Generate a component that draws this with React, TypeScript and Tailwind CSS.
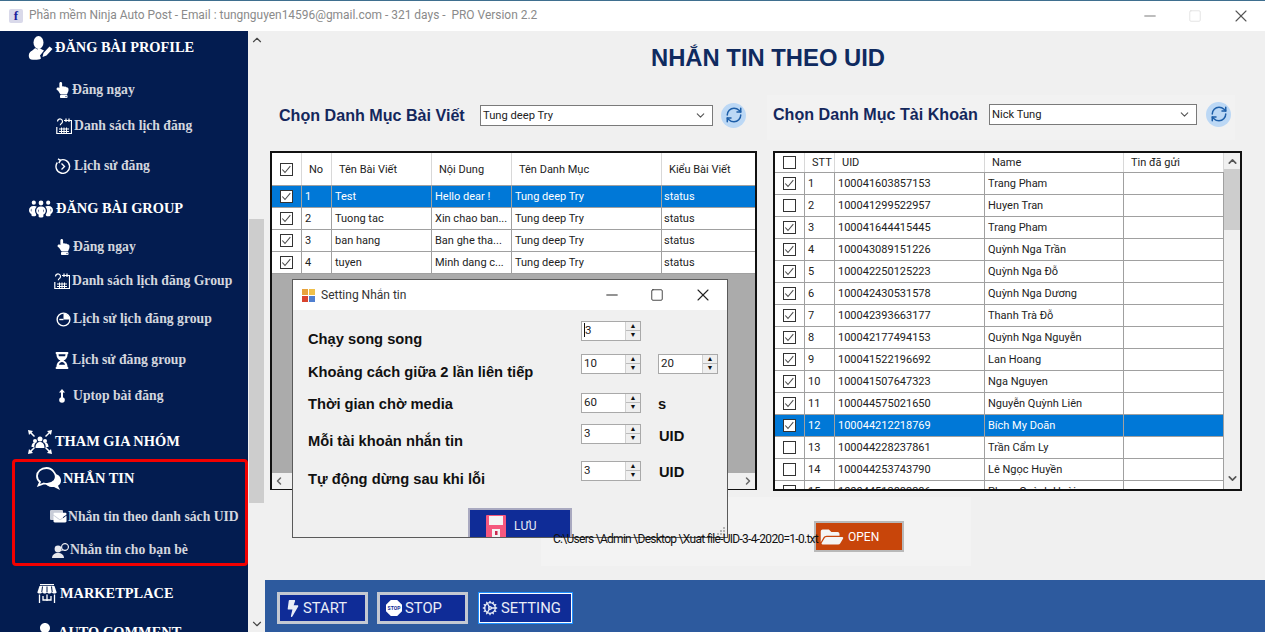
import { FaBolt, FaEnvelope, FaFolderOpen, FaHandPointUp, FaHourglassHalf, FaUserTie } from "react-icons/fa";
import { FaPeopleGroup } from "react-icons/fa6";
import { LuChevronDown, LuChevronLeft, LuChevronRight, LuChevronUp, LuCog, LuMinus, LuRefreshCw, LuSquare, LuX } from "react-icons/lu";
import type { ReactNode } from "react";

const navy = "#031c50";

const ProfileIcon = () => (
  <svg viewBox="0 0 25 25" className="h-[25px] w-[25px]" fill="white">
    <ellipse cx="10.500" cy="6.500" rx="5" ry="6.500" />
    <path d="M7 12c-1 2-5 3-6 6-.6 2 0 5 2 5.500 3 .6 8 .6 10-1l-1-3 4-5-5-2.500-1.500 1.500z" />
    <path d="M14.500 21l1-4 6-6.500 3 2.500-6 6.500z" />
  </svg>
);

const CalendarIcon = () => (
  <svg viewBox="0 0 16 16" className="h-[16px] w-[16px]" fill="none" stroke="white" strokeWidth="1.200">
    <path d="M1.500 3.500a2.500 2.500 0 1 1 4 2c-.8.500-1.200 1-1.200 1.800" />
    <path d="M8 2.500h7.500V15.500H.8V9" />
    <path d="M10 .5v3.500M13 .5v3.500" />
    <path d="M3 11h10M3 13.500h10M5.500 9.500v5.500M8 9.500v5.500M10.500 9.500v5.500" strokeWidth="1" />
  </svg>
);

const HistoryIcon = () => (
  <svg viewBox="0 0 16 16" className="h-[16px] w-[16px]" fill="none" stroke="white" strokeWidth="1.400">
    <path d="M5 2.300A6.800 6.800 0 1 1 2.300 4.500" />
    <path d="M3 .8L5.500 2.500 3.800 5" />
    <path d="M6.500 5.500L9.500 8.500 6.500 11.500" />
  </svg>
);

const ClockIcon = () => (
  <svg viewBox="0 0 16 16" className="h-[15px] w-[15px]" fill="none" stroke="white" strokeWidth="1.500">
    <circle cx="8" cy="8" r="6.800" />
    <path d="M8 8V1.500A6.500 6.500 0 0 1 14.500 8z" fill="white" stroke="none" />
    <path d="M8 8H3.500" />
  </svg>
);

const UptopIcon = () => (
  <svg viewBox="0 0 8 14" className="h-[14px] w-[8px]" fill="white">
    <path d="M4 0l3 3.500H5V9H3V3.500H1z" />
    <circle cx="4" cy="11" r="2.800" />
  </svg>
);

const JoinIcon = () => (
  <svg viewBox="0 0 24 24" className="h-[24px] w-[24px]" fill="white">
    <circle cx="12" cy="9" r="2.500" />
    <circle cx="7" cy="11" r="2" />
    <circle cx="17" cy="11" r="2" />
    <path d="M7.500 18c0-3.500 1.500-6 4.500-6s4.500 2.500 4.500 6zM3.500 17c0-2.500 1-4.500 3.500-4.500l.8.200C6.500 14 6.300 15.500 6.300 17zM20.500 17c0-2.500-1-4.500-3.500-4.500l-.8.200c1.300 1.300 1.500 2.800 1.500 4.300z" />
    <path d="M0 0l5 1-1.400 1.400L7 6 6 7 2.400 3.600 1 5zM24 0l-1 5-1.400-1.400L18 7l-1-1 3.600-3.400L19 1zM0 24l1-5 1.400 1.400L6 17l1 1-3.400 3.600L5 23zM24 24l-5-1 1.400-1.400L17 18l1-1 3.600 3.400L23 19z" />
  </svg>
);

const ChatIcon = () => (
  <svg viewBox="0 0 25 24" className="h-[24px] w-[25px]">
    <path d="M18 7c4 0 7 2.700 7 6.500 0 2.500-1 4-3 5.300l2 4.200-6-3c-5 .5-9-2-9-6 0-4 4-7 9-7z" fill="white" />
    <path d="M10.500 1C5 1 1 4.500 1 9c0 2.500 1.200 4.500 3 6l-1.500 3.500L8 16.500c4 1 8-.2 10.500-3 2-2.500 1.500-6-1-9-1.500-2-4-3.500-7-3.500z" fill={navy} stroke="white" strokeWidth="1.800" />
  </svg>
);

const StoreIcon = () => (
  <svg viewBox="0 0 20 20" className="h-[20px] w-[20px]" fill="none" stroke="white">
    <path d="M3 .5h14" strokeWidth="1.500" />
    <path d="M2.500 2h15L19.500 8H.5z" fill="white" stroke="none" />
    <path d="M5.500 2.500L4.800 8M10 2.500V8M14.500 2.500l.7 5.500" stroke={navy} strokeWidth="1" />
    <path d="M.5 8c0 1.800 4 1.800 4.800 0 .8 1.800 3.900 1.800 4.700 0 .8 1.800 3.900 1.800 4.700 0 .8 1.800 4.800 1.800 4.800 0" fill="white" strokeWidth="0.500" />
    <path d="M2.500 10.500V19M17.500 10.500V19M10 10.500V17M6 12v4h8v-4" strokeWidth="1.300" />
  </svg>
);

const Mail = () => (
  <span className="relative block h-[14px] w-[17px]">
    <span className="absolute left-0 top-0 h-[10px] w-[13px] rounded-[1px] bg-[#c9cdd8]" />
    <FaEnvelope className="absolute bottom-0 right-0 h-[13px] w-[14px] text-white" />
  </span>
);

const Friend = () => (
  <svg viewBox="0 0 17 16" className="h-[16px] w-[17px]" fill="#e8e9ee">
    <circle cx="6" cy="7" r="3.400" />
    <path d="M0 16c0-3 2.500-5 6-5s6 2 6 5z" />
    <path d="M9 5a4 4 0 1 1 2 3.400l-2 .8.700-1.800A4 4 0 0 1 9 5zm1.200 0a2.800 2.800 0 0 0 5.600 0 2.800 2.800 0 0 0-5.600 0z" />
  </svg>
);

type NavRow = { label: string; icon: ReactNode; row: string; box: string; head?: boolean };

const nav: NavRow[] = [
  { label: "ĐĂNG BÀI PROFILE", icon: <ProfileIcon />, row: "mt-[5px] pl-[28px]", box: "w-[27px]", head: true },
  { label: "Đăng ngay", icon: <FaHandPointUp className="h-[16px] w-[13px] text-white" />, row: "mt-[18px] pl-[56px]", box: "w-[16px]" },
  { label: "Danh sách lịch đăng", icon: <CalendarIcon />, row: "mt-[12px] pl-[56px]", box: "w-[18px]" },
  { label: "Lịch sử đăng", icon: <HistoryIcon />, row: "mt-[16px] pl-[55px]", box: "w-[19px]" },
  { label: "ĐĂNG BÀI GROUP", icon: <FaPeopleGroup className="h-[24px] w-[24px] text-white" />, row: "mt-[19px] pl-[29px]", box: "w-[27px]", head: true },
  { label: "Đăng ngay", icon: <FaHandPointUp className="h-[16px] w-[13px] text-white" />, row: "mt-[14px] pl-[57px]", box: "w-[16px]" },
  { label: "Danh sách lịch đăng Group", icon: <CalendarIcon />, row: "mt-[10px] pl-[54px]", box: "w-[18px]" },
  { label: "Lịch sử lịch đăng group", icon: <ClockIcon />, row: "mt-[14px] pl-[56px]", box: "w-[17px]" },
  { label: "Lịch sử đăng group", icon: <FaHourglassHalf className="h-[17px] w-[14px] text-white" />, row: "mt-[17px] pl-[55px]", box: "w-[17px]" },
  { label: "Uptop bài đăng", icon: <UptopIcon />, row: "mt-[12px] pl-[58px]", box: "w-[15px]" },
  { label: "THAM GIA NHÓM", icon: <JoinIcon />, row: "mt-[22px] pl-[28px]", box: "w-[27px]", head: true },
  { label: "NHẮN TIN", icon: <ChatIcon />, row: "mt-[13px] pl-[36px]", box: "w-[27px]", head: true },
  { label: "Nhắn tin theo danh sách UID", icon: <Mail />, row: "mt-[14px] pl-[50px]", box: "w-[18px]" },
  { label: "Nhắn tin cho bạn bè", icon: <Friend />, row: "mt-[9px] pl-[52px]", box: "w-[18px]" },
  { label: "MARKETPLACE", icon: <StoreIcon />, row: "mt-[20px] pl-[37px]", box: "w-[23px]", head: true },
  { label: "AUTO COMMENT", icon: <FaUserTie className="h-[20px] w-[20px] text-white" />, row: "mt-[15px] pl-[35px]", box: "w-[23px]", head: true },
];

const Check = ({ on }: { on: boolean }) => (
  <span className="flex h-[13px] w-[13px] items-center justify-center border border-[#333333] bg-white">
    {on && (
      <svg viewBox="0 0 13 13" className="h-[11px] w-[11px]" fill="none" stroke="#4a4a4a" strokeWidth="1.200">
        <path d="M1.500 6.500l3.200 3.500L11 2.500" />
      </svg>
    )}
  </span>
);

const posts = [
  ["1", "Test", "Hello dear !", "Tung deep Try", "status"],
  ["2", "Tuong tac", "Xin chao ban...", "Tung deep Try", "status"],
  ["3", "ban hang", "Ban ghe tha...", "Tung deep Try", "status"],
  ["4", "tuyen", "Minh dang c...", "Tung deep Try", "status"],
];

const accounts: [string, string, string, boolean][] = [
  ["1", "100041603857153", "Trang Pham", true],
  ["2", "100041299522957", "Huyen Tran", false],
  ["3", "100041644415445", "Trang Pham", true],
  ["4", "100043089151226", "Quỳnh Nga Trần", true],
  ["5", "100042250125223", "Quỳnh Nga Đỗ", true],
  ["6", "100042430531578", "Quỳnh Nga Dương", true],
  ["7", "100042393663177", "Thanh Trà Đỗ", true],
  ["8", "100042177494153", "Quỳnh Nga Nguyễn", true],
  ["9", "100041522196692", "Lan Hoang", true],
  ["10", "100041507647323", "Nga Nguyen", true],
  ["11", "100044575021650", "Nguyễn Quỳnh Liên", true],
  ["12", "100044212218769", "Bích My Doãn", true],
  ["13", "100044228237861", "Trần Cẩm Ly", false],
  ["14", "100044253743790", "Lê Ngọc Huyền", false],
  ["15", "100044513883386", "Phạm Quỳnh Hoài", false],
];

const Combo = ({ value, width }: { value: string; width: string }) => (
  <div className={`flex h-[21px] ${width} shrink-0 items-center justify-between border border-[#7a7a7a] bg-white pl-[2px] pr-[5px] text-[11.2px] text-[#222222]`}>
    <span className="pt-[2px]">{value}</span>
    <LuChevronDown className="h-[13px] w-[13px] text-[#555555]" />
  </div>
);

const Refresh = () => (
  <span className="flex h-[25px] w-[25px] shrink-0 items-center justify-center rounded-full bg-[#bcd8f5]">
    <LuRefreshCw className="h-[18px] w-[18px] text-[#1d5ea8]" />
  </span>
);

const Spin = ({ value, caret }: { value: string; caret?: boolean }) => (
  <div className="flex h-[20px] w-[60px] shrink-0 border border-[#a9a9a9] bg-white font-['Roboto',sans-serif] text-[11.5px] font-normal leading-[16px] text-[#222222]">
    <span className="flex-1 pl-[2px]">
      <span className={caret ? "border-l border-[#111111]" : ""}>{value}</span>
    </span>
    <span className="flex w-[15px] flex-col border-l border-[#d0d0d0] bg-[#efefef] text-[#111111]">
      <span className="flex h-[9px] items-center justify-center border-b border-[#bbbbbb] text-[7px] leading-none">▲</span>
      <span className="flex h-[9px] items-center justify-center text-[7px] leading-none">▼</span>
    </span>
  </div>
);

const Floppy = () => (
  <svg viewBox="0 0 20 22" className="h-[22px] w-[20px]">
    <path d="M1 0h18a1 1 0 0 1 1 1v21H0V1a1 1 0 0 1 1-1z" fill="#f5587e" />
    <rect x="3" y="1" width="14" height="9" fill="#f4f4f4" />
    <rect x="6" y="14" width="8" height="8" fill="#f4f4f4" />
    <rect x="9" y="16" width="2.500" height="4" fill="#c9284f" />
  </svg>
);

const StopIcon = () => (
  <span className="flex h-[16px] w-[16px] items-center justify-center bg-white text-[5px] font-bold leading-none text-[#0f2c97] [clip-path:polygon(30%_0,70%_0,100%_30%,100%_70%,70%_100%,30%_100%,0_70%,0_30%)]">STOP</span>
);

const ActionButton = ({ icon, label, active }: { icon: ReactNode; label: string; active?: boolean }) => (
  <div className={`flex h-[32px] items-center gap-[3px] bg-[#0f2c97] text-[14.8px] text-[#e9edf7] ${active ? "w-[95px] border border-[#1e90ff] pl-[3px] outline outline-1 -outline-offset-2 outline-white" : "w-[91px] border-[3px] border-[#c4c9d2] pl-[6px]"}`}>
    {icon}
    {label}
  </div>
);

export default function App() {
  return (
    <div className="relative flex h-[632px] w-[1265px] flex-col overflow-hidden bg-[#f0f0f0] font-['Roboto',sans-serif]">
      {/* window title */}
      <div className="flex h-[31px] shrink-0 items-center border-t border-[#3f6f8f] bg-white pl-[9px] text-[11.95px] text-[#8a8a8a]">
        <span className="mr-[6px] flex h-[14px] w-[14px] items-center justify-center rounded-[2px] bg-[#d9d9ea] font-['Liberation_Serif',serif] text-[13px] font-bold text-[#1b1f9c]">f</span>
        <span className="whitespace-pre">Phần mềm Ninja Auto Post - Email : tungnguyen14596@gmail.com - 321 days -  PRO Version 2.2</span>
        <div className="ml-auto flex items-center pr-[14px]">
          <LuMinus strokeWidth={1.3} className="mr-[29px] h-[18px] w-[18px] text-[#777777]" />
          <LuSquare strokeWidth={1.3} className="mr-[29px] h-[14px] w-[14px] text-[#dddddd]" />
          <LuX strokeWidth={1.3} className="h-[20px] w-[20px] text-[#555555]" />
        </div>
      </div>

      <div className="flex min-h-0 flex-1">
        {/* sidebar */}
        <div className="relative w-[248px] shrink-0 overflow-hidden bg-[#031c50] font-['Liberation_Serif',serif] font-bold">
          {nav.map((item, i) => (
            <div key={i} className={`flex h-[24px] items-center whitespace-nowrap ${item.row} ${item.head ? "text-[14.4px] text-white" : "text-[13.7px] text-[#d3d6de]"}`}>
              <span className={`flex shrink-0 items-center ${item.box}`}>{item.icon}</span>
              {item.label}
            </div>
          ))}
          <div className="pointer-events-none absolute left-[12px] top-[428px] h-[107px] w-[236px] rounded-[4px] border-[3px] border-[#f20000]" />
        </div>

        {/* sidebar scrollbar */}
        <div className="flex w-[17px] shrink-0 flex-col items-center bg-[#f0f0f0] text-[#444444]">
          <LuChevronUp className="mt-[2px] h-[14px] w-[14px]" />
          <div className="mt-[172px] h-[284px] w-[15px] bg-[#cdcdcd]" />
          <LuChevronDown className="mb-[1px] mt-auto h-[14px] w-[14px]" />
        </div>

        {/* main */}
        <div className="relative flex min-w-0 flex-1 flex-col">
          <div className="flex h-[54px] shrink-0 items-center justify-center pl-[6px] font-['Liberation_Sans',sans-serif] text-[23.8px] font-bold text-[#0f2a5f]">NHẮN TIN THEO UID</div>

          <div className="flex pl-[5px] pt-[10px]">
            {/* posts */}
            <div className="w-[487px] shrink-0">
              <div className="flex h-[40px] items-center pl-[9px]">
                <span className="w-[201px] shrink-0 pt-[1px] font-['Liberation_Sans',sans-serif] text-[16.1px] font-bold text-[#14275c]">Chọn Danh Mục Bài Viết</span>
                <Combo value="Tung deep Try" width="w-[233px]" />
                <span className="ml-[8px]"><Refresh /></span>
              </div>
              <div className="mt-[16px] h-[339px] border-2 border-[#111111] bg-[#ababab] text-[11px] text-[#222222]">
                <div className="flex h-[33px] border-b border-[#a0a0a0] bg-white">
                  <div className="flex w-[30px] items-center justify-center border-r border-[#d8d8d8]"><Check on /></div>
                  <div className="flex w-[30px] items-center border-r border-[#d8d8d8] pl-[7px] pt-[2px]">No</div>
                  <div className="flex w-[100px] items-center border-r border-[#d8d8d8] pl-[7px] pt-[2px]">Tên Bài Viết</div>
                  <div className="flex w-[80px] items-center border-r border-[#d8d8d8] pl-[7px] pt-[2px]">Nội Dung</div>
                  <div className="flex w-[150px] items-center border-r border-[#d8d8d8] pl-[7px] pt-[2px]">Tên Danh Mục</div>
                  <div className="flex flex-1 items-center pl-[7px] pt-[2px]">Kiểu Bài Viết</div>
                </div>
                {posts.map((p, i) => (
                  <div key={p[0]} className={`flex h-[22px] border-b border-[#a0a0a0] ${i === 0 ? "bg-[#0078d7] text-white" : "bg-white"}`}>
                    <div className="flex w-[30px] items-center justify-center border-r border-[#a0a0a0]"><Check on /></div>
                    <div className="flex w-[30px] items-center border-r border-[#a0a0a0] pl-[3px] pt-[2px]">{p[0]}</div>
                    <div className="flex w-[100px] items-center border-r border-[#a0a0a0] pl-[3px] pt-[2px]">{p[1]}</div>
                    <div className="flex w-[80px] items-center whitespace-nowrap border-r border-[#a0a0a0] pl-[3px] pt-[2px]">{p[2]}</div>
                    <div className="flex w-[150px] items-center border-r border-[#a0a0a0] pl-[3px] pt-[2px]">{p[3]}</div>
                    <div className="flex flex-1 items-center pl-[2px] pt-[2px]">{p[4]}</div>
                  </div>
                ))}
                <div className="mt-[199px] flex h-[16px] items-center justify-between bg-[#f0f0f0] px-[1px] text-[#666666]">
                  <LuChevronLeft strokeWidth={3} className="h-[12px] w-[12px]" />
                  <LuChevronRight strokeWidth={3} className="h-[12px] w-[12px]" />
                </div>
              </div>
            </div>

            {/* accounts */}
            <div className="ml-[10px] w-[475px] shrink-0">
              <div className="flex h-[45px] w-[468px] items-center bg-[#f2f2f2] pb-[7px] pl-[6px]">
                <span className="w-[216px] shrink-0 pt-[1px] font-['Liberation_Sans',sans-serif] text-[16.1px] font-bold text-[#14275c]">Chọn Danh Mục Tài Khoản</span>
                <Combo value="Nick Tung" width="w-[208px]" />
                <span className="ml-[9px]"><Refresh /></span>
              </div>
              <div className="ml-[6px] mt-[11px] flex h-[340px] w-[469px] overflow-hidden border-2 border-[#111111] bg-white text-[11px] text-[#222222]">
                <div className="w-[449px] shrink-0">
                  <div className="flex h-[20px] border-b border-[#a0a0a0]">
                    <div className="flex w-[30px] items-center justify-center border-r border-[#d8d8d8]"><Check on={false} /></div>
                    <div className="flex w-[30px] items-center border-r border-[#d8d8d8] pl-[7px] pt-[2px]">STT</div>
                    <div className="flex w-[150px] items-center border-r border-[#d8d8d8] pl-[7px] pt-[2px]">UID</div>
                    <div className="flex w-[139px] items-center border-r border-[#d8d8d8] pl-[7px] pt-[2px]">Name</div>
                    <div className="flex w-[100px] items-center border-r border-[#d8d8d8] pl-[7px] pt-[2px]">Tin đã gửi</div>
                  </div>
                  {accounts.map(([n, uid, name, on]) => (
                    <div key={n} className={`flex h-[22px] border-b border-[#a0a0a0] ${n === "12" ? "bg-[#0078d7] text-white" : ""}`}>
                      <div className="flex w-[30px] items-center justify-center border-r border-[#a0a0a0]"><Check on={on} /></div>
                      <div className="flex w-[30px] items-center border-r border-[#a0a0a0] pl-[3px] pt-[2px]">{n}</div>
                      <div className="flex w-[150px] items-center border-r border-[#a0a0a0] pl-[3px] pt-[2px]">{uid}</div>
                      <div className="flex w-[139px] items-center border-r border-[#a0a0a0] pl-[3px] pt-[2px]">{name}</div>
                      <div className="w-[100px] border-r border-[#a0a0a0]" />
                    </div>
                  ))}
                </div>
                <div className="flex h-full flex-1 flex-col items-center bg-[#f0f0f0] text-[#555555]">
                  <LuChevronUp strokeWidth={3} className="mt-[2px] h-[13px] w-[13px]" />
                  <div className="mt-[1px] h-[61px] w-full bg-[#cdcdcd]" />
                  <LuChevronDown strokeWidth={3} className="mb-[4px] mt-auto h-[13px] w-[13px]" />
                </div>
              </div>
            </div>
          </div>

          {/* file path */}
          <div className="ml-[276px] mt-[6px] flex h-[69px] w-[430px] items-center bg-[#f3f3f3] pl-[12px] pt-[10px] text-[12px] text-[#111111]">
            <span className="relative z-10 w-[261px] shrink-0 whitespace-nowrap pt-[5px] tracking-[-0.72px]">C:\Users \Admin \Desktop \Xuat file-UID-3-4-2020=1-0.txt</span>
            <div className="flex h-[31px] w-[90px] items-center border-2 border-[#b9b9b9] bg-[#c8450a] pl-[4px] text-[12px] text-white">
              <FaFolderOpen className="mr-[4px] h-[20px] w-[24px] text-[#f4f4f4]" />
              OPEN
            </div>
          </div>

          {/* bottom bar */}
          <div className="mt-auto flex h-[52px] shrink-0 items-center gap-[9px] bg-[#2d5a9e] pl-[12px] pt-[4px]">
            <ActionButton icon={<FaBolt className="h-[17px] w-[14px]" />} label="START" />
            <ActionButton icon={<StopIcon />} label="STOP" />
            <span className="ml-[1px]">
              <ActionButton icon={<LuCog className="h-[16px] w-[16px]" />} label="SETTING" active />
            </span>
          </div>

          {/* settings dialog */}
          <div className="absolute left-[27px] top-[248px] h-[259px] w-[436px] overflow-hidden border border-[#5a5a5a] bg-[#f0f0f0] text-[#111111]">
            <div className="flex h-[30px] items-center bg-white pl-[9px] text-[12px] text-[#333333]">
              <span className="mr-[6px] grid h-[13px] w-[13px] grid-cols-2 gap-[1px]">
                <span className="bg-[#e8a33d]" />
                <span className="bg-[#f0c04a]" />
                <span className="bg-[#d9442f]" />
                <span className="bg-[#4f7fd0]" />
              </span>
              Setting Nhắn tin
              <div className="ml-auto flex items-center pr-[14px]">
                <LuMinus strokeWidth={1.3} className="mr-[29px] h-[18px] w-[18px] text-[#222222]" />
                <LuSquare strokeWidth={1.4} className="mr-[29px] h-[14px] w-[14px] text-[#222222]" />
                <LuX strokeWidth={1.3} className="h-[20px] w-[20px] text-[#222222]" />
              </div>
            </div>
            <div className="pl-[15px] pt-[11px] font-['Liberation_Sans',sans-serif] text-[14.7px] font-bold leading-[20px]">
              <div className="flex h-[33px]">
                <span className="w-[273px] pt-[8px]">Chạy song song</span>
                <Spin value="3" caret />
              </div>
              <div className="flex h-[39px]">
                <span className="w-[273px] pt-[8px]">Khoảng cách giữa 2 lần liên tiếp</span>
                <Spin value="10" />
                <span className="ml-[17px]"><Spin value="20" /></span>
              </div>
              <div className="flex h-[31px]">
                <span className="w-[273px] pt-[1px]">Thời gian chờ media</span>
                <Spin value="60" />
                <span className="ml-[17px] pt-[1px]">s</span>
              </div>
              <div className="flex h-[37px]">
                <span className="w-[273px] pt-[7px]">Mỗi tài khoản nhắn tin</span>
                <Spin value="3" />
                <span className="ml-[18px] pt-[2px]">UID</span>
              </div>
              <div className="flex h-[47px]">
                <span className="w-[273px] pt-[8px]">Tự động dừng sau khi lỗi</span>
                <Spin value="3" />
                <span className="ml-[18px] pt-[1px]">UID</span>
              </div>
            </div>
            <div className="ml-[175px] flex h-[40px] w-[104px] items-start border-2 border-[#a9a9c0] bg-[#0f2c97] pl-[16px] pt-[5px] font-['Roboto',sans-serif] text-[12px] text-[#e6e9f5]">
              <Floppy />
              <span className="ml-[8px] pt-[2px]">LƯU</span>
            </div>
            {/* resize grip */}
            <svg viewBox="0 0 10 10" className="absolute bottom-[1px] right-[1px] h-[10px] w-[10px]" fill="#b5b5b5">
              <rect x="7" y="1" width="2" height="2" />
              <rect x="4" y="4" width="2" height="2" />
              <rect x="7" y="4" width="2" height="2" />
              <rect x="1" y="7" width="2" height="2" />
              <rect x="4" y="7" width="2" height="2" />
              <rect x="7" y="7" width="2" height="2" />
            </svg>
          </div>
        </div>
      </div>
    </div>
  );
}
